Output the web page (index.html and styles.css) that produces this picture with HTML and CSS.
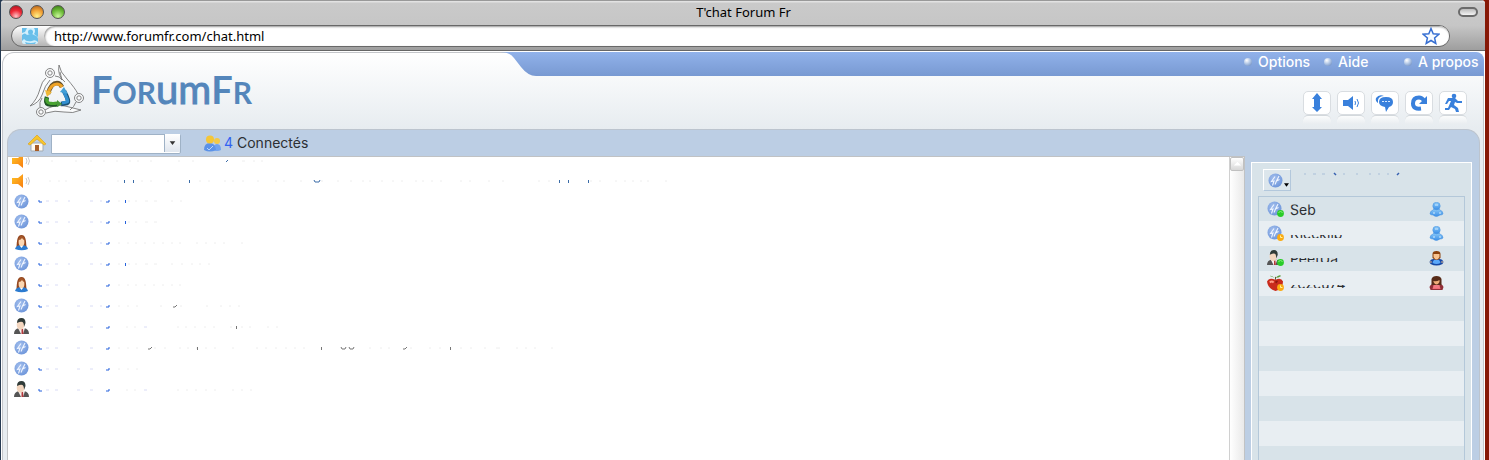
FILE: index.html
```html
<!DOCTYPE html>
<html lang="fr">
<head>
<meta charset="utf-8">
<title>T'chat Forum Fr</title>
<link rel="stylesheet" href="styles.css">
</head>
<body>
<svg class="defs" aria-hidden="true">
  <defs>
    <radialGradient id="orb" cx=".4" cy=".35" r=".7"><stop offset="0" stop-color="#a3bfed"/><stop offset="1" stop-color="#6d95da"/></radialGradient>
    <linearGradient id="gold" x2="1" y2="1"><stop offset="0" stop-color="#ffc526"/><stop offset="1" stop-color="#f87d10"/></linearGradient>
    <linearGradient id="sky" x2="0" y2="1"><stop offset="0" stop-color="#8ccaf8"/><stop offset="1" stop-color="#3b8fe8"/></linearGradient>
    <linearGradient id="tab" x2="0" y2="1"><stop offset="0" stop-color="#91b2ea"/><stop offset="1" stop-color="#7899d2"/></linearGradient>
    <symbol id="i-sound" viewBox="0 0 18 14"><path d="M0 4h6l5-4v14l-5-4H0z" fill="url(#gold)"/><path d="M14 4q2 3 0 6M16 3q3 4 0 8" fill="none" stroke="#bbb" stroke-width=".8"/></symbol>
    <symbol id="i-orb" viewBox="0 0 15 15"><circle cx="7.500" cy="7.500" r="7" fill="url(#orb)"/><path d="M7 3.500L3.500 8.500 6 8 4.500 12.500M11 3L8.500 8l3-1.500M8.500 8L7 11.500" fill="none" stroke="#eef4ff" stroke-width="1.100"/></symbol>
    <symbol id="i-girl" viewBox="0 0 15 17"><path d="M2.500 13C3 7 3 1 7.500 1s4.500 6 5 12z" fill="#95481f"/><path d="M1 15q1-4 6.500-4t6.500 4q-6 2.500-13 0z" fill="#2b7bd0"/><ellipse cx="7.500" cy="8" rx="2.900" ry="4.200" fill="#fbd7b2"/><path d="M5 6q2 0 3-2 1 2 2.500 2-.5-4-3-4T5 6" fill="#a4572a"/><path d="M6 12h3l-1.500 2z" fill="#fff"/></symbol>
    <symbol id="i-man" viewBox="0 0 15 17"><path d="M0 16q0-5 5-6l5 0q5 1 5 6z" fill="#555"/><path d="M4 10l3 6h2l2-6z" fill="#f4f0ee"/><path d="M7.500 11H9l.5 5h-2z" fill="#b5383c"/><ellipse cx="6.500" cy="6.800" rx="3.800" ry="5" fill="#f3d6bf"/><path d="M3 5Q3 0 7.500 0q4 0 4 5l-1.500 4q0-4-1.500-5T3 5" fill="#303b38"/></symbol>
    <symbol id="i-apple" viewBox="0 0 18 17"><path d="M9 5q6-3 8 2 0 8-8 10-8-2-9-10 2-5 9-2" fill="#c92b1c"/><path d="M3 8q2-2 4 0" stroke="#ff9a83" stroke-width="2" fill="none"/><path d="M9 6q-1 2 1 3l2-3" fill="#8b170f"/><path d="M9 5V2" stroke="#5d4520"/><path d="M9 3q4-4 6-2-3 2-6 2M8 3Q4 0 3 1" fill="#579839"/></symbol>
    <symbol id="i-on" viewBox="0 0 7 7"><circle cx="3.500" cy="3.500" r="3.400" fill="#29cc28"/><path d="M1.500 2.500q2-2 4 0" stroke="#8bf07d" fill="none"/></symbol>
    <symbol id="i-away" viewBox="0 0 7 7"><circle cx="3.500" cy="3.500" r="3.400" fill="#fbab12"/><path d="M3.500 1.500v2h2" stroke="#fff3a0" fill="none"/></symbol>
    <symbol id="i-pawn" viewBox="0 0 13 15"><path d="M3 8Q0 9 0 12q1 1 3 1 3 3 7 0 2 0 3-1 0-3-3-4l-1-1H4z" fill="url(#sky)" stroke="#4c96e0" stroke-width=".6"/><circle cx="6.500" cy="4" r="3.700" fill="url(#sky)" stroke="#4c96e0" stroke-width=".6"/><path d="M5 3h3M3 11h2M9 11h2" stroke="#d3edff"/></symbol>
    <symbol id="i-boy" viewBox="0 0 14 15"><path d="M0 11q1-3 4-3h6q3 0 4 3l-1 2q-6 3-12 0z" fill="#1648a4"/><path d="M3 12q1-4 4-4t4 4q-4 2-8 0" fill="#5ba8fa"/><path d="M0 11l2-1v2zM14 11l-2-1v2z" fill="#f5c08c"/><path d="M3 3q0-3 4-3t4 3v4q-4 4-8 0z" fill="#8b420f"/><path d="M4 3h6v3q-3 5-6 0z" fill="#f8c390"/></symbol>
    <symbol id="i-lady" viewBox="0 0 14 15"><path d="M0 11q1-3 4-3h6q3 0 4 3l-1 3H1z" fill="#913038"/><path d="M3 13q1-5 4-5t4 5z" fill="#f06c76"/><path d="M2 9V3q1-3 5-3t5 3v6z" fill="#572b18"/><path d="M4 5q3 1 6-1v2q-3 5-6 0z" fill="#efad78"/><path d="M4 9h6v3H4z" fill="#f27a83"/></symbol>
  </defs>
</svg>

<div class="window">
  <header class="chrome">
    <div class="titlebar">
      <div class="lights"><i class="light red"></i><i class="light amber"></i><i class="light green"></i></div>
      <span class="title">T'chat Forum Fr</span>
      <button class="pill" aria-label="Barre d'outils"></button>
    </div>
    <div class="urlbar">
      <svg class="favicon" viewBox="0 0 16 16"><rect width="16" height="16" rx="2" fill="#d3f0fd"/><path d="M0 0h5L3 4 0 5zM12 0h4v9l-4-3q2-3 0-6M0 7q3-3 5 0 5-2 7 0 4 1 4 4v3q-3-3-6-1-6 1-8-2l-2 2zM3 14q6 2 11 0l-1 2H4z" fill="#69bfea"/><circle cx="8.500" cy="4" r="2.500" fill="#69bfea"/></svg>
      <input class="url" aria-label="Adresse" value="http://www.forumfr.com/chat.html">
      <svg class="star" viewBox="0 0 18 18"><path d="M9 1.500l2.200 5.200 5.600.5-4.200 3.700 1.200 5.500L9 13.500l-4.800 2.900 1.200-5.500-4.200-3.700 5.600-.5z" fill="#f7fbff" stroke="#376fd2" stroke-width="1.500"/></svg>
    </div>
  </header>

  <main class="page">
    <div class="head">
      <a class="brand" href="#">
        <svg class="mark" viewBox="0 0 56 54" fill="none">
          <g stroke="#777" stroke-width=".9" fill="#fafbfc">
            <path d="M17 14Q13 17 11 25 8 36 1 42q9-3 12-11 3-10 8-15M36 18q-8-6-6-17 1 7 8 14 8 9 11 15M47 38q-2 5-6 8M16 46q9-6 20-4 8 2 16 4-8 4-17 2-9-2-18 1M11 43q-1-5 2-9M26 12q5 0 7 4l-2-8"/>
            <circle cx="21" cy="9" r="4.500"/><circle cx="50" cy="34" r="4.500"/><circle cx="12" cy="48" r="4.500"/>
            <circle cx="21" cy="9" r="2.200"/><circle cx="50" cy="34" r="2.200"/><circle cx="12" cy="48" r="2.200"/>
          </g>
          <path d="M19 30q3-11 9-11 3 0 5 4" stroke="#64502b" stroke-width="4.500"/><path d="M19 29q3-9 9-9 3 0 5 3" stroke="#eea225" stroke-width="3.200"/><path d="M16 26l7 2-5 5z" fill="#efb838"/>
          <path d="M35 27q6 11 3 12l-6 1" stroke="#1d5376" stroke-width="4.500"/><path d="M35 28q5 10 3 10l-5 1" stroke="#328fd0" stroke-width="3.200"/><path d="M31 28l4-5 4 7z" fill="#42a0d8"/>
          <path d="M18 33q-2 6 1 7 5 1 10 0" stroke="#205626" stroke-width="4.500"/><path d="M18 34q-1 4 2 5 4 1 8 0" stroke="#48a331" stroke-width="3.200"/><path d="M28 36l5 4-5 3z" fill="#479837"/>
        </svg>
        <span class="wordmark">F<span class="sc">OR</span><span class="lc">um</span>F<span class="sc">R</span></span>
      </a>
      <div class="head-right">
        <nav class="menu">
          <svg class="curve" viewBox="0 0 36 24" preserveAspectRatio="none"><path d="M0 0h36v24q-8 0-15-9L14 6Q10 0 0 0z" fill="url(#tab)"/></svg>
          <div class="links"><a href="#">Options</a><a href="#">Aide</a><a href="#">A propos</a></div>
        </nav>
        <div class="tools">
          <button aria-label="Défilement"><svg viewBox="0 0 20 20"><path d="M10 0l5 6h-2v8h2l-5 5-5-5h2V6H5z"/></svg></button>
          <button aria-label="Son"><svg viewBox="0 0 20 20"><path d="M2 7h5l5-4v14l-5-4H2z"/><path d="M14 8q1 2 0 4M16 6q3 4 0 8" class="line"/></svg></button>
          <button aria-label="Bulles"><svg viewBox="0 0 20 20"><path d="M3 10Q0 8 1 5q3-4 8-2-5 0-6 4z"/><path d="M11 4q7 0 7 5 0 4-4 5l-3 5-1-5q-6-1-6-5 0-5 7-5"/><path d="M7 8.500h2m1 0h2m1 0h2" stroke="#d5e8ff"/></svg></button>
          <button aria-label="Actualiser"><svg viewBox="0 0 20 20"><path d="M12 15.500q-8 1-8-5 0-6 6-6 3 0 5 3" fill="none" stroke="#3980dc" stroke-width="4"/><path d="M18 3v8h-8z"/></svg></button>
          <button aria-label="Quitter"><svg viewBox="0 0 20 20"><circle cx="11" cy="3" r="2.300"/><path d="M5 5h7l3 3h4v2h-5l-2-1-1 3 4 3 1 4h-3l-1-3-4-2-2 3H2v-2h3l3-7H6l-2 3H2z"/></svg></button>
        </div>
      </div>
    </div>

    <section class="panel">
      <div class="roombar">
        <svg class="home" viewBox="0 0 18 17"><path d="M3 8h12v8H3z" fill="#fffaf0" stroke="#a2abb4"/><path d="M7 10h4v6H7z" fill="#a85d27"/><path d="M0 9l9-9 9 9-2 1-7-6-7 6z" fill="#f8c62a" stroke="#dba322" stroke-width=".7"/></svg>
        <div class="combo"><select aria-label="Salon"><option></option></select><svg viewBox="0 0 16 18"><path d="M5 7h6l-3 4z" fill="#333"/></svg></div>
        <svg class="people" viewBox="0 0 17 17"><path d="M9 15q0-6 4-6t4 6q-4 2-8 0" fill="#6fa2ee"/><circle cx="13" cy="6" r="3" fill="#f3c947"/><path d="M0 15q0-7 6-7 5 0 6 7-6 3-12 0" fill="#5b92e8"/><circle cx="6" cy="4.500" r="4" fill="#f4c638"/><path d="M3 13l2 2 4-4" stroke="#b9d6fc" fill="none"/></svg>
        <span class="count"><b>4</b> Connectés</span>
      </div>

      <div class="columns">
        <div class="chat">
          <ul class="log">
            <li class="short"><svg class="ico wide"><use href="#i-sound"/></svg><svg class="trace" viewBox="36 0 660 6"><path class="faint" d="M52 3h2m22 0h2m13 0h2m11 0h2m11 0h2m11 0h2m6 0h2m11 0h2m26 0h2m12 0h2m48 0h3m8 0h2m6 0h2"/><path class="navy" d="M227 4l2-2"/></svg></li>
            <li class="short"><svg class="ico wide"><use href="#i-sound"/></svg><svg class="trace" viewBox="36 0 660 6"><path class="faint" d="M50 3h2m7 0h2m5 0h2m17 0h2m6 0h2m6 0h2m15 0h2m22 0h2m7 0h2m15 0h2m30 0h2m7 0h2m14 0h2m6 0h2m8 0h2m13 0h2m16 0h2m6 0h2m15 0h2m19 0h2m14 0h2m11 0h2m10 0h2m5 0h2m10 0h2m9 0h2m7 0h2m12 0h2m5 0h2m7 0h2m7 0h2m18 0h2m7 0h2m17 0h2m12 0h2m34 0h2m8 0h2m40 0h2m7 0h2m14 0h2m7 0h2m6 0h2m6 0h2m5 0h2m16 0h2"/><path class="navy" d="M125.500 2v3m9-3v3m56-3v3m370-3v3m9-3v3m20-3v3M315 2l1 2h4l1-2"/></svg></li>
            <li class="short"><svg class="ico"><use href="#i-orb"/></svg><svg class="trace" viewBox="36 0 660 6"><path class="lilac" d="M47 3h3m6 0h3m10 0h2m20 0h3m7 0h2"/><path class="blue" d="M40 2v2h3m64 0h3V2m16.500 0v3"/><path class="faint" d="M119 3h2m8 0h2m5 0h2m8 0h3m6 0h3m14 0h2m7 0h2"/></svg></li>
            <li><svg class="ico"><use href="#i-orb"/></svg><svg class="trace" viewBox="36 0 660 6"><path class="lilac" d="M47 3h3m6 0h3m10 0h2m20 0h3m7 0h2"/><path class="blue" d="M40 2v2h3m64 0h3V2m16.500 0v3"/><path class="faint" d="M119 3h2m8 0h2m5 0h2m8 0h3m6 0h3"/></svg></li>
            <li><svg class="ico"><use href="#i-girl"/></svg><svg class="trace" viewBox="36 0 660 6"><path class="lilac" d="M47 3h3m6 0h3m10 0h2m20 0h3m7 0h2"/><path class="blue" d="M40 2v2h3m64 0h3V2"/><path class="faint" d="M119 3h2m7 0h2m6 0h2m7 0h2m7 0h2m7 0h2m7 0h2m6 0h2m15 0h2m7 0h2m7 0h2m7 0h2m16 0h2"/></svg></li>
            <li><svg class="ico"><use href="#i-orb"/></svg><svg class="trace" viewBox="36 0 660 6"><path class="lilac" d="M47 3h3m6 0h3m10 0h2m20 0h3m7 0h2"/><path class="blue" d="M40 2v2h3m64 0h3V2m16.500 0v3"/><path class="faint" d="M119 3h2m8 0h2m5 0h2m8 0h3m6 0h3m14 0h2m8 0h2m8 0h2m6 0h2m7 0h2"/></svg></li>
            <li><svg class="ico"><use href="#i-girl"/></svg><svg class="trace" viewBox="36 0 660 6"><path class="lilac" d="M47 3h3m6 0h3m10 0h2"/><path class="blue" d="M40 2v2h3m64 0h3V2"/><path class="faint" d="M119 3h2m7 0h2m6 0h2m7 0h2m7 0h2m7 0h2m7 0h2m6 0h2"/></svg></li>
            <li><svg class="ico"><use href="#i-orb"/></svg><svg class="trace" viewBox="36 0 660 6"><path class="lilac" d="M47 3h3m6 0h3m19 0h3m10 0h3m7 0h2"/><path class="blue" d="M40 2v2h3m64 0h3V2"/><path class="faint" d="M119 3h2m7 0h2m7 0h2m22 0h2m18 0h2m24 0h2m12 0h2m7 0h2m7 0h2"/><path class="dark" d="M174 4h2l2-2"/></svg></li>
            <li><svg class="ico"><use href="#i-man"/></svg><svg class="trace" viewBox="36 0 660 6"><path class="lilac" d="M47 3h3m6 0h3m19 0h3m10 0h3m51 0h3"/><path class="blue" d="M40 2v2h3m64 0h3V2"/><path class="faint" d="M127 3h2m6 0h2m41 0h2m6 0h2m7 0h2m8 0h2m7 0h2m15 0h2m9 0h2m6 0h2m16 0h2m7 0h2"/><path class="dark" d="M237.500 2v3"/></svg></li>
            <li><svg class="ico"><use href="#i-orb"/></svg><svg class="trace" viewBox="36 0 660 6"><path class="lilac" d="M47 3h3m6 0h3m19 0h3m10 0h3"/><path class="blue" d="M40 2v2h3m64 0h3V2"/><path class="faint" d="M119 3h2m7 0h2m7 0h2m16 0h2m8 0h2m13 0h2m6 0h2m7 0h2m7 0h2m7 0h2m16 0h2m22 0h2m7 0h2m8 0h2m8 0h2m7 0h2m7 0h2M370 3h2m9 0h2m6 0h2m20 0h2m17 0h2m8 0h2m19 0h2m8 0h2m12 0h2m10 0h4m16 0h2m7 0h2m7 0h2m15 0h2"/><path class="dark" d="M149 4h2l2-2m45.500 0v3m124-3v3M342 2l1 2h3l1-2m3 0l1 2h3l1-2m49 2h2l2-2m43.500 0v3"/></svg></li>
            <li><svg class="ico"><use href="#i-orb"/></svg><svg class="trace" viewBox="36 0 660 6"><path class="lilac" d="M47 3h3m6 0h3m19 0h3m10 0h3"/><path class="blue" d="M40 2v2h3m64 0h3V2"/><path class="faint" d="M119 3h2m7 0h2m7 0h2"/></svg></li>
            <li><svg class="ico"><use href="#i-man"/></svg><svg class="trace" viewBox="36 0 660 6"><path class="lilac" d="M47 3h3m6 0h3m19 0h3m10 0h3m51 0h3"/><path class="blue" d="M40 2v2h3m64 0h3V2"/><path class="faint" d="M127 3h2m6 0h2m41 0h2m7 0h2m7 0h2m8 0h2m7 0h2m16 0h2m7 0h2m7 0h2"/></svg></li>
          </ul>
          <div class="scroll"><button aria-label="Monter"><svg viewBox="0 0 13 13"><path d="M3 8l4-4 4 4z" fill="#fff"/></svg></button></div>
        </div>

        <aside class="side">
          <div class="me">
            <button aria-label="Statut"><svg class="ico"><use href="#i-orb"/></svg><svg class="drop" viewBox="0 0 6 4"><path d="M0 0h6L3 4z"/></svg></button>
            <svg class="me-trace" viewBox="0 0 104 6"><path d="M1 3h2m7 0h3m6 0h3m18 0h2m11 0h2m11 0h2m7 0h2m7 0h2" stroke="#a9bfd8"/><path d="M31 2l2 2M94 4l2-2" stroke="#3660b0" stroke-width="1.500"/></svg>
          </div>
          <ul class="users">
            <li><svg class="avatar"><use href="#i-orb" width="15" height="15"/><use href="#i-on" x="10" y="9" width="7" height="7"/></svg><span class="name n1">Seb</span><svg class="rank"><use href="#i-pawn"/></svg></li>
            <li><svg class="avatar"><use href="#i-orb" width="15" height="15"/><use href="#i-away" x="10" y="9" width="7" height="7"/></svg><span class="name n2">Kieekiip</span><svg class="rank"><use href="#i-pawn"/></svg></li>
            <li><svg class="avatar"><use href="#i-man" width="14" height="16"/><use href="#i-on" x="10" y="9" width="7" height="7"/></svg><span class="name n3">PeetUa</span><svg class="rank"><use href="#i-boy"/></svg></li>
            <li><svg class="avatar"><use href="#i-apple" width="17" height="16"/><use href="#i-away" x="10" y="9" width="7" height="7"/></svg><span class="name n4">zezeu74</span><svg class="rank"><use href="#i-lady"/></svg></li>
          </ul>
        </aside>
      </div>
    </section>
  </main>
</div>
</body>
</html>
```
FILE: styles.css
```css
* { box-sizing: border-box; }
html, body { height: 100%; }
body {
  margin: 0;
  padding: 0 4px 0 1px;
  overflow: hidden;
  background: linear-gradient(90deg, #263a52 50%, #861806 50%);
  font: 14px/20px Inter, "Liberation Sans", sans-serif;
  color: #2c2f33;
}
button { padding: 0; font: inherit; }
ul { margin: 0; padding: 0; list-style: none; }
a { color: inherit; text-decoration: none; }
svg { display: block; flex: none; }
.defs { position: absolute; width: 0; height: 0; }

.window { display: flex; flex-direction: column; height: 100%; background: #fff; border-radius: 4px 4px 0 0; overflow: hidden; }

.chrome {
  flex: none;
  padding: 0 35px 3px 10px;
  border-top: 1px solid #999;
  border-bottom: 1px solid #666;
  background: linear-gradient(#e2e2e2 0 1px, #cacaca 2px, #c6c6c6 50%, #9e9e9e);
  font-family: "Noto Sans", sans-serif;
  font-size: 13px;
  color: #000;
}
.titlebar { display: grid; grid-template-columns: 1fr auto 1fr; align-items: center; height: 24px; margin-left: -2px; margin-right: -28px; }
.lights { display: flex; gap: 7px; }
.light { width: 14px; height: 14px; margin-top: -2px; border-radius: 50%; border: 1px solid #555; }
.red { background: radial-gradient(circle at 50% 85%, #ffc4c8, #ee2836 50%, #a8111c); }
.amber { background: radial-gradient(circle at 50% 85%, #fff18a, #f3a438 50%, #a95715); }
.green { background: radial-gradient(circle at 50% 85%, #c9f79b, #6fbd3a 50%, #33740f); }
.title { margin-top: -2px; }
.pill { justify-self: end; width: 20px; height: 10px; margin-top: -2px; border: 2px solid #6b6b6b; border-radius: 5px; background: linear-gradient(#bbb, #f4f4f4); }
.urlbar {
  display: flex;
  align-items: center;
  height: 22px;
  border: 1px solid #686868;
  border-radius: 11px;
  background: linear-gradient(#fff, #b5b5b5);
}
.favicon { width: 16px; height: 16px; margin: 0 6px 0 10px; }
.url { flex: 1; min-width: 0; height: 20px; padding: 0 10px; border: 0; border-radius: 10px; background: #fff; font: 13px/20px "Noto Sans", sans-serif; box-shadow: inset 1px 1px 2px #999; }
.star { width: 18px; height: 18px; margin: 0 9px 0 -27px; }

.page {
  flex: 1;
  min-height: 0;
  display: flex;
  flex-direction: column;
  margin: 1px 1px 0;
  padding: 0 3px 0 4px;
  border: 1px solid #c4c6ca;
  border-bottom: 0;
  border-radius: 12px 10px 0 0;
  background: linear-gradient(#fff, #e7ecf0 76px);
}
.head { flex: none; display: flex; height: 76px; }
.brand { display: flex; width: 493px; padding: 11px 0 0 22px; }
.mark { width: 56px; height: 54px; }
.wordmark { display: flex; align-items: baseline; height: 54px; margin-left: 6px; font: bold 38px/50px Lato, sans-serif; color: #5486bb; }
.sc { font-size: 30px; }
.lc { font-size: 40px; -webkit-text-stroke: 0; font-weight: 400; -webkit-text-stroke: 1px #5486bb; }
.head-right { flex: 1; min-width: 0; margin-right: -4px; margin-top: -1px; }
.menu { display: flex; height: 24px; }
.curve { width: 36px; height: 24px; }
.links { flex: 1; display: flex; justify-content: flex-end; background: linear-gradient(#91b2ea, #7899d2); border-radius: 0 8px 0 0; color: #fff; font-weight: 500; }
.links a { display: flex; align-items: center; gap: 6px; width: 80px; height: 20px; white-space: nowrap; }
.links a::before { content: ""; flex: none; width: 8px; height: 8px; border-radius: 50%; background: radial-gradient(circle at 35% 30%, #fff, #a9c0e2 50%, #6080b6); }
.tools { display: flex; justify-content: flex-end; gap: 6px; padding: 15px 17px 0 0; }
.tools button {
  position: relative;
  display: grid;
  place-items: center;
  width: 28px;
  height: 24px;
  border: 1px solid #d9dde1;
  border-radius: 5px;
  background: #fff;
}
.tools button::after { content: ""; position: absolute; top: 23px; left: -1px; right: -1px; height: 8px; border-top: 1px solid #d3d8dc; border-radius: 5px 5px 0 0; background: linear-gradient(#fbfcfc, #e9edf0); }
.tools svg { width: 20px; height: 20px; fill: #3980dc; }
.line { fill: none; stroke: #3980dc; }

.panel {
  flex: 1;
  min-height: 0;
  display: flex;
  flex-direction: column;
  border: 1px solid #bcc4ce;
  border-bottom: 0;
  border-radius: 14px 14px 0 0;
  background: #bccee4;
}
.roombar { flex: none; display: flex; align-items: center; height: 26px; padding-left: 20px; }
.home { width: 18px; height: 17px; }
.combo { position: relative; width: 130px; height: 20px; margin: 0 23px 0 5px; }
.combo select { appearance: none; width: 100%; height: 20px; border: 1px solid #9fb2c6; border-radius: 0 2px 2px 0; background: #fff; }
.combo svg { position: absolute; right: 1px; top: 1px; width: 16px; height: 18px; border-left: 1px solid #9fb2c6; background: linear-gradient(#fff, #e0e6ee); pointer-events: none; }
.people { width: 17px; height: 17px; margin-right: 3px; }
.count b { font-weight: 400; color: #3162f2; }

.columns { flex: 1; min-height: 0; display: flex; }
.chat { flex: 1; min-width: 0; display: flex; margin-left: -1px; border: 1px solid #c0c2c4; border-bottom: 0; background: #fff; overflow: hidden; }
.log { flex: 1; min-width: 0; margin-top: -6px; overflow: hidden; }
.log li { display: flex; align-items: center; gap: 6px; height: 21px; padding-left: 6px; }
.log .short { height: 20px; }
.ico { width: 15px; height: 17px; }
.log .wide { width: 18px; height: 14px; margin: 0 -1px 0 -2px; }
.trace { width: 660px; height: 6px; fill: none; }
.faint { stroke: #eee; }
.lilac { stroke: #d9dcf5; }
.blue { stroke: #2461dc; }
.navy { stroke: #3b6ca8; }
.dark { stroke: #777; }
.scroll { flex: none; width: 15px; border-left: 1px solid #d0d0d0; background: linear-gradient(90deg, #fff, #e9e9e9); }
.scroll button { display: block; width: 14px; height: 14px; border: 1px solid #c0c0c0; border-radius: 2px; background: linear-gradient(#fff, #d8d8d8); }
.scroll svg { width: 12px; height: 12px; }

.side { flex: none; display: flex; flex-direction: column; width: 221px; margin: 6px 7px 0 6px; padding: 0 6px; border: 1px solid #fff; border-bottom: 0; background: #d8e3e9; }
.me { display: flex; height: 33px; padding: 6px 0 0 5px; }
.me button { display: flex; align-items: center; gap: 1px; width: 28px; height: 22px; padding-left: 4px; border: 1px solid #b3c8dc; border-top-color: #fff; border-left-color: #fff; background: #dce6ec; }
.drop { width: 5px; height: 4px; margin-top: 10px; }
.me-trace { width: 104px; height: 6px; margin: 2px 0 0 12px; fill: none; }
.users { flex: 1; min-height: 0; overflow: hidden; border: 1px solid #b4c8d9; border-bottom: 0; background: repeating-linear-gradient(#d8e3e9 0 25px, #e8eef2 25px 50px); }
.users li { display: flex; align-items: center; height: 25px; padding: 0 20px 0 8px; }
.users li:first-child { height: 24px; }
.users { background-position: 0 -1px; }
.avatar { width: 18px; height: 17px; }
.name { flex: 1; margin-left: 5px; line-height: 25px; }
.n1 { clip-path: inset(8px 0 0); }
.n2 { clip-path: inset(14px 0 8px); }
.n3 { clip-path: inset(12px 0 9px); }
.n4 { clip-path: inset(14px 0 8px); }
.rank { width: 15px; height: 15px; }
```
